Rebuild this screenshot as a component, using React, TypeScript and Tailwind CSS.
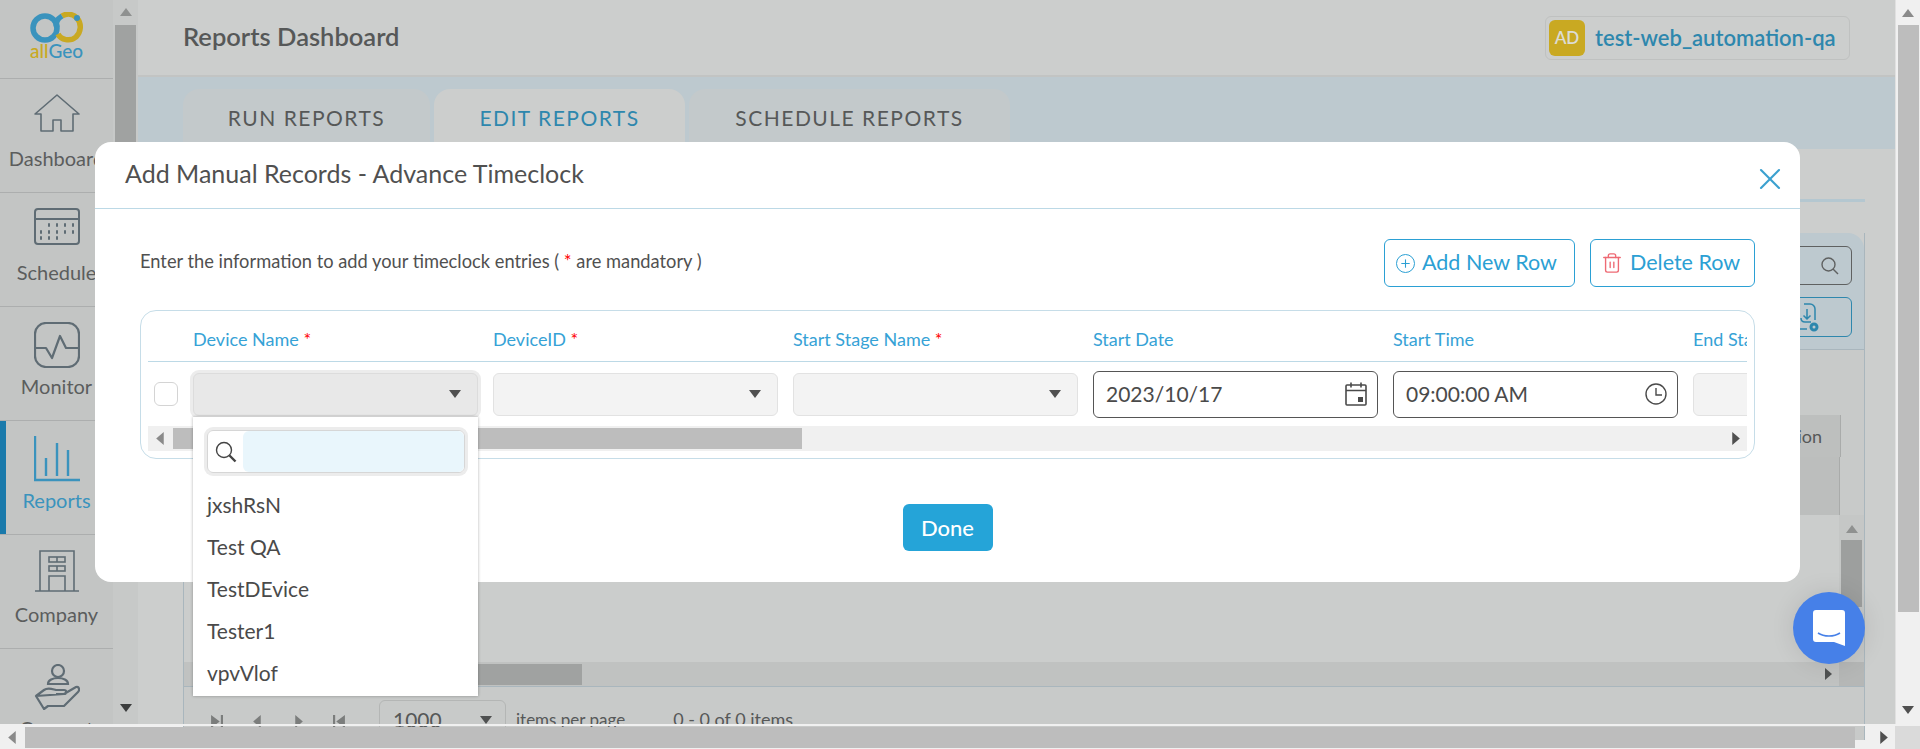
import { Plus, Trash2, X } from "lucide-react";

const font = { fontFamily: "Lato, 'Open Sans', sans-serif" };

function Tri({ dir, className }: { dir: "up" | "down" | "left" | "right"; className?: string }) {
  const pts = {
    up: "0,10 6,2 12,10",
    down: "0,2 12,2 6,10",
    left: "9,0 9,12 2,6",
    right: "3,0 3,12 10,6",
  }[dir];
  return (
    <svg viewBox="0 0 12 12" className={className} fill="currentColor">
      <polygon points={pts} />
    </svg>
  );
}

function PagerEnd({ flip }: { flip?: boolean }) {
  return (
    <svg viewBox="0 0 12 12" className="h-[13px] w-[13px]" fill="currentColor">
      {flip ? <path d="M0 0h2v12H0zM11 0v12L3 6z" /> : <path d="M10 0h2v12h-2zM1 0v12l8-6z" />}
    </svg>
  );
}

function NavIcon({ name }: { name: string }) {
  const common = {
    width: 46,
    height: 46,
    viewBox: "0 0 46 46",
    fill: "none",
    stroke: "#5f6c74",
    strokeWidth: 1.6,
  };
  if (name === "Dashboard")
    return (
      <svg {...common}>
        <path d="M1 20 23 1l22 19h-6v17H27V26H19v11H7V20Z" strokeLinejoin="round" />
      </svg>
    );
  if (name === "Schedule")
    return (
      <svg {...common} strokeWidth={2}>
        <rect x="1" y="1" width="44" height="35" rx="3" />
        <path d="M1 11h44" />
        <path
          d="M14 17h2M22 17h2M30 17h2M38 17h2M6 24h2M14 24h2M22 24h2M30 24h2M38 24h2M6 30h2M14 30h2M22 30h2"
          strokeWidth={3.4}
        />
      </svg>
    );
  if (name === "Monitor")
    return (
      <svg {...common} strokeWidth={2.2}>
        <rect x="1" y="1" width="44" height="44" rx="11" />
        <path d="M2 26h10l6 10 8-22 6 12h12" strokeLinejoin="round" />
      </svg>
    );
  if (name === "Reports")
    return (
      <svg {...common} stroke="#3a93bd" strokeWidth={2.4}>
        <path d="M1 0v44h45" />
        <path d="M12 22v18M23 7v33M34 14v26" />
      </svg>
    );
  if (name === "Company")
    return (
      <svg {...common}>
        <path d="M6 41V1h34v40M1 41h44" />
        <rect x="15" y="7" width="16" height="5" />
        <rect x="15" y="16" width="16" height="5" />
        <path d="M23 7v5M23 16v5M15 41V26h16v15" />
      </svg>
    );
  return (
    <svg {...common} strokeWidth={2.2}>
      <circle cx="24" cy="7" r="6" />
      <path d="M14 20c0-8 20-8 20 0Z" />
      <path d="M2 32l8-6c4-3 8-1 12 0h8c3 0 3 4 0 4h-8m8 0 12-7c3-1 4 3 2 5L30 42H14l-4 3L2 32Z" strokeLinejoin="round" />
    </svg>
  );
}

const navItems = ["Dashboard", "Schedule", "Monitor", "Reports", "Company", "Connect"];

function Sidebar() {
  return (
    <div className="w-[113px] shrink-0 overflow-hidden bg-[#c3c5c4]">
      <div className="flex h-[79px] flex-col items-center border-b border-[#acaeae] pt-3">
        <svg width="54" height="32" viewBox="0 0 54 32" fill="none">
          <circle cx="15" cy="16" r="12" stroke="#3a93bd" strokeWidth="5.5" />
          <path d="M28 22c3 6 12 8 18 3 5-5 6-13 1-19-4-4-10-5-15-2" stroke="#c9a922" strokeWidth="5.5" />
          <path d="M27 16c-2-5 0-9 5-12" stroke="#3a93bd" strokeWidth="5.5" />
          <circle cx="47" cy="6" r="3" fill="#3a93bd" />
        </svg>
        <div className="mt-[-1px] text-[19px] leading-[16px] font-medium">
          <span className="text-[#c9a922]">all</span>
          <span className="text-[#3a93bd]">Geo</span>
        </div>
      </div>
      {navItems.map((name) => (
        <div
          key={name}
          className={
            name === "Reports"
              ? "flex h-[114px] flex-col items-center border-b border-[#acaeae] pt-[15px] text-[#3a93bd] shadow-[inset_6px_0_0_#1a7aab]"
              : "flex h-[114px] flex-col items-center border-b border-[#acaeae] pt-[15px] text-[#5b5d5d]"
          }
        >
          <NavIcon name={name} />
          <span className="mt-[6px] text-[20px] leading-[24px] whitespace-nowrap">{name}</span>
        </div>
      ))}
    </div>
  );
}

function MainBehind() {
  return (
    <div className="flex min-w-0 flex-1 flex-col bg-[#c8cac9]">
      <div className="flex h-[75px] shrink-0 items-center justify-between bg-[#cccecd] pr-[45px] pl-[45px]">
        <span className="mt-[-2px] text-[25.5px] font-semibold text-[#565858]">Reports Dashboard</span>
        <div className="flex h-[44px] w-[305px] items-center gap-[10px] rounded-md border border-[#bfc1c0] pl-[3px]">
          <span className="flex h-[36px] w-[36px] items-center justify-center rounded-md bg-[#c9a922] text-[17px] font-semibold text-[#dcdcd4]">
            AD
          </span>
          <span className="text-[22px] font-semibold text-[#2e87ad]">test-web_automation-qa</span>
        </div>
      </div>
      <div className="flex h-[74px] shrink-0 items-end gap-[4px] border-t-2 border-[#c2c4c3] bg-[#bdc9cf] pl-[45px]">
        <div className="flex h-[60px] w-[247px] items-center justify-center rounded-t-2xl bg-[#c3c9cb] pb-[3px] text-[21px] tracking-[1.5px] text-[#565858]">
          RUN REPORTS
        </div>
        <div className="flex h-[60px] w-[251px] items-center justify-center rounded-t-2xl bg-[#cccecd] pb-[3px] text-[21px] tracking-[1.5px] text-[#2e87ad]">
          EDIT REPORTS
        </div>
        <div className="flex h-[60px] w-[321px] items-center justify-center rounded-t-2xl bg-[#c3c9cb] pb-[3px] text-[21px] tracking-[1.5px] text-[#565858]">
          SCHEDULE REPORTS
        </div>
      </div>
      <div className="flex min-h-0 flex-1 flex-col bg-[#cccecd] pr-[30px] pl-[45px]">
        <div className="mt-[50px] h-[3px] shrink-0 bg-[#b4c7d0]" />
        <div className="mt-[31px] flex flex-1 flex-col border-x border-[#a9b6bd]">
          <div className="flex h-[117px] shrink-0 flex-col items-end gap-[12px] rounded-t-2xl border-b border-[#a9b6bd] bg-[#bdc9cf] pt-[13px] pr-[12px]">
            <div className="flex h-[39px] w-[300px] items-center justify-end rounded-md border border-[#5f6161] pr-[12px]">
              <svg width="18" height="18" viewBox="0 0 18 18" fill="none" stroke="#5f6161" strokeWidth="1.4">
                <circle cx="7.5" cy="7.5" r="6.5" />
                <path d="m12 12 5 5" />
              </svg>
            </div>
            <div className="flex h-[40px] w-[70px] items-center justify-start rounded-md border border-[#2e87ad] pl-[16px]">
              <svg width="20" height="29" viewBox="0 0 20 29" fill="none" stroke="#2e87ad" strokeWidth="1.5">
                <path d="M0 26h8M16 17V6a5 5 0 0 0-5-5H5M8 6v10M4.500 12.500 8 16l3.500-3.500M2 15c0 3 2 4 4 4h6" />
                <circle cx="15" cy="24" r="3" strokeWidth="3" />
              </svg>
            </div>
          </div>
          <div className="h-[65px] shrink-0 bg-[#c8cac9]" />
          <div className="flex h-[42px] shrink-0 bg-[#bdbfbe]">
            <div className="flex flex-1 items-center justify-end pr-[18px] text-[18px] text-[#565858]">Location</div>
            <div className="w-[24px] border-l border-[#a9abaa] bg-[#c8cac9]" />
          </div>
          <div className="flex h-[58px] shrink-0 bg-[#bcbebd]">
            <div className="flex-1 border-r border-[#a9abaa]" />
            <div className="w-[24px] bg-[#c8cac9]" />
          </div>
          <div className="flex h-[147px] shrink-0 bg-[#cbcdcc]">
            <div className="flex-1" />
            <div className="flex w-[25px] flex-col items-center bg-[#c5c7c6] pt-[8px] text-[#8f9190]">
              <Tri dir="up" className="h-[12px] w-[12px]" />
              <div className="mt-[5px] h-[67px] w-[21px] bg-[#9d9f9e]" />
            </div>
          </div>
          <div className="flex h-[25px] shrink-0 border-b border-[#a9b6bd] bg-[#c0c2c1]">
            <div className="flex flex-1 items-center">
              <div className="ml-[30px] h-[21px] w-[368px] bg-[#a0a2a1]" />
              <Tri dir="right" className="mr-[5px] ml-auto h-[12px] w-[12px] text-[#4f5151]" />
            </div>
            <div className="w-[25px] bg-[#b5b7b6]" />
          </div>
          <div className="flex min-h-0 flex-1 items-start overflow-hidden bg-[#c8cac9] pl-[26px] text-[#565858]">
            <div className="mt-[28px] flex gap-[28px] text-[#7b7d7c]">
              <PagerEnd />
              <Tri dir="left" className="h-[13px] w-[13px]" />
              <Tri dir="right" className="h-[13px] w-[13px]" />
              <PagerEnd flip />
            </div>
            <div className="mt-[13px] ml-[33px] flex h-[40px] w-[127px] shrink-0 items-center justify-between rounded-md border border-[#b4b6b5] px-[13px] text-[21px]">
              1000
              <Tri dir="down" className="h-[12px] w-[12px] text-[#4f5151]" />
            </div>
            <span className="mt-[20px] ml-[10px] text-[17px] whitespace-nowrap">items per page</span>
            <span className="mt-[19px] ml-[48px] text-[18px] whitespace-nowrap">0 - 0 of 0 items</span>
          </div>
        </div>
      </div>
    </div>
  );
}

function Star() {
  return <span className="text-[#ff0000]">*</span>;
}

function SelectBox({ open }: { open?: boolean }) {
  return (
    <div
      className={
        open
          ? "flex h-[43px] w-[285px] items-center justify-end rounded-md border border-[#dcdcdc] bg-[#e8e8e8] pr-[16px] shadow-[0_0_0_3px_#ececec]"
          : "flex h-[43px] w-[285px] items-center justify-end rounded-md border border-[#e2e2e2] bg-[#f3f3f3] pr-[16px]"
      }
    >
      <Tri dir="down" className="h-[12px] w-[12px] text-[#505050]" />
    </div>
  );
}

function DateBox({ value, icon }: { value: string; icon: "date" | "time" }) {
  return (
    <div className="flex h-[47px] w-[285px] items-center justify-between rounded-md border border-[#555] pr-[10px] pl-[12px] text-[21px] text-[#4a4a4a]">
      {value}
      {icon === "date" ? (
        <svg width="22" height="24" viewBox="0 0 22 24" fill="none" stroke="#4a4a4a" strokeWidth="1.6">
          <rect x="1" y="3" width="20" height="20" rx="1" />
          <path d="M1 8.500h20M6 0.500v5M16 0.500v5" />
          <rect x="13" y="15" width="5" height="5" fill="#4a4a4a" stroke="none" />
        </svg>
      ) : (
        <svg width="22" height="22" viewBox="0 0 22 22" fill="none" stroke="#4a4a4a" strokeWidth="1.4">
          <circle cx="11" cy="11" r="10" />
          <path d="M11 5v7h6" />
        </svg>
      )}
    </div>
  );
}

const columns = [
  { label: "Device Name", required: true },
  { label: "DeviceID", required: true },
  { label: "Start Stage Name", required: true },
  { label: "Start Date", required: false },
  { label: "Start Time", required: false },
  { label: "End Stage Name", required: false },
];

function RecordsTable() {
  return (
    <div className="mt-[23px] rounded-2xl border border-[#c6dde8] px-[7px] pb-[7px]">
      <div className="overflow-hidden">
        <div className="flex h-[51px] w-[1600px] items-center border-b border-[#bcd9e6] pt-[6px] pl-[45px]">
          {columns.map((c) => (
            <div key={c.label} className="w-[300px] shrink-0 text-[18px] whitespace-nowrap text-[#36a2d6]">
              {c.label} {c.required && <Star />}
            </div>
          ))}
        </div>
        <div className="flex h-[64px] items-center">
          <div className="ml-[6px] h-[24px] w-[24px] shrink-0 rounded-md border border-[#d4d4d4]" />
          <div className="ml-[15px] flex items-center gap-[15px]">
            <SelectBox open />
            <SelectBox />
            <SelectBox />
            <DateBox value="2023/10/17" icon="date" />
            <DateBox value="09:00:00 AM" icon="time" />
            <SelectBox />
          </div>
        </div>
      </div>
      <div className="flex h-[25px] items-center bg-[#f0f0f0]">
        <Tri dir="left" className="ml-[6px] h-[13px] w-[13px] text-[#8a8a8a]" />
        <div className="ml-[6px] h-[21px] w-[629px] bg-[#bdbdbd]" />
        <Tri dir="right" className="mr-[5px] ml-auto h-[13px] w-[13px] text-[#505050]" />
      </div>
    </div>
  );
}

function DeviceDropdown() {
  const options = ["jxshRsN", "Test QA", "TestDEvice", "Tester1", "vpvVlof"];
  return (
    <div className="absolute top-[275px] left-[98px] z-10 h-[279px] w-[285px] bg-white shadow-[0_0_3px_rgba(0,0,0,0.3)]">
      <div className="mx-[14px] mt-[13px] flex h-[43px] w-[258px] items-center rounded-md border border-[#d6d6d6] shadow-[0_0_0_3px_#ececec]">
        <svg width="24" height="24" viewBox="0 0 24 24" fill="none" stroke="#444" className="ml-[6px] shrink-0">
          <circle cx="10" cy="10" r="7.500" strokeWidth="1.4" />
          <path d="m15.500 15.500 6 6" strokeWidth="2.4" />
        </svg>
        <div className="ml-[5px] h-full flex-1 rounded-md bg-[#e9f6fc]" />
      </div>
      <div className="mt-[11px] flex flex-col">
        {options.map((o) => (
          <div key={o} className="flex h-[42px] items-center pl-[14px] text-[21px] text-[#4a4a4a]">
            {o}
          </div>
        ))}
      </div>
    </div>
  );
}

function ManualRecordsModal() {
  return (
    <div className="absolute top-[142px] left-[95px] h-[440px] w-[1705px] rounded-2xl bg-white">
      <div className="flex h-[67px] items-start justify-between border-b border-[#bcd9e6] pr-[12px] pl-[30px]">
        <span className="mt-[13px] text-[25px] text-[#505050]">Add Manual Records - Advance Timeclock</span>
        <X size={36} strokeWidth={1.4} className="mt-[19px] text-[#3ba0cf]" />
      </div>
      <div className="px-[45px] pt-[30px] pb-[30px]">
        <div className="flex items-center justify-between">
          <span className="mt-[-2px] text-[18.300px] text-[#505050]">
            Enter the information to add your timeclock entries ( <Star /> are mandatory )
          </span>
          <div className="flex gap-[15px] text-[21.500px] text-[#2ba0d4]">
            <button className="flex h-[48px] w-[191px] items-center gap-[7px] rounded-md border border-[#2ba0d4] pb-[2px] pl-[11px]">
              <span className="mt-[2px] flex h-[19px] w-[19px] items-center justify-center rounded-full border-[1.5px] border-[#2ba0d4]">
                <Plus size={13} strokeWidth={2} />
              </span>
              Add New Row
            </button>
            <button className="flex h-[48px] w-[165px] items-center gap-[7px] rounded-md border border-[#2ba0d4] pb-[2px] pl-[10px]">
              <Trash2 size={22} strokeWidth={1.5} className="mt-[2px] text-[#ee6a74]" />
              Delete Row
            </button>
          </div>
        </div>
        <RecordsTable />
        <div className="mt-[45px] flex justify-center">
          <button className="h-[47px] w-[90px] rounded-md bg-[#25a4d8] text-[22px] font-medium text-white">Done</button>
        </div>
      </div>
      <DeviceDropdown />
    </div>
  );
}

function ChatBubble() {
  return (
    <div className="absolute top-[592px] left-[1793px] flex h-[72px] w-[72px] items-center justify-center rounded-full bg-[#4680e8] shadow-[0_0_24px_rgba(0,0,0,0.1)]">
      <svg width="32" height="36" viewBox="0 0 32 36">
        <path d="M3 0h26a3 3 0 0 1 3 3v33l-11-4H3a3 3 0 0 1-3-3V3a3 3 0 0 1 3-3Z" fill="#fff" />
        <path d="M5 23c6 4 16 4 22 0" fill="none" stroke="#4680e8" strokeWidth="1.6" />
      </svg>
    </div>
  );
}

export default function App() {
  return (
    <div className="relative flex h-[749px] w-[1920px] flex-col overflow-hidden bg-[#f0f0f0]" style={font}>
      <div className="flex min-h-0 flex-1">
        <Sidebar />
        <div className="flex w-[25px] shrink-0 flex-col items-center justify-between bg-[#c7c9c8] pt-[6px] pb-[10px]">
          <div className="flex flex-col items-center text-[#8f9190]">
            <Tri dir="up" className="h-[12px] w-[12px]" />
            <div className="mt-[7px] h-[380px] w-[21px] bg-[#a0a2a1]" />
          </div>
          <Tri dir="down" className="h-[12px] w-[12px] text-[#3c3e3e]" />
        </div>
        <MainBehind />
        <div className="flex w-[25px] shrink-0 flex-col items-center border-l border-[#e0e0e0] bg-[#f0f0f0] pb-[8px]">
          <Tri dir="up" className="mt-[7px] h-[12px] w-[12px] text-[#8a8a8a]" />
          <div className="mt-[6px] h-[587px] w-[21px] bg-[#bdbdbd]" />
          <Tri dir="down" className="mt-auto h-[12px] w-[12px] text-[#505050]" />
        </div>
      </div>
      <div className="flex h-[25px] shrink-0 items-center border-t-2 border-[#f0f0f0]">
        <Tri dir="left" className="ml-[6px] h-[13px] w-[13px] text-[#8a8a8a]" />
        <div className="ml-[6px] h-[21px] w-[1830px] bg-[#bdbdbd]" />
        <Tri dir="right" className="ml-[22px] h-[13px] w-[13px] text-[#505050]" />
        <div className="ml-auto h-full w-[25px] bg-[#dadada]" />
      </div>
      <ManualRecordsModal />
      <ChatBubble />
    </div>
  );
}
